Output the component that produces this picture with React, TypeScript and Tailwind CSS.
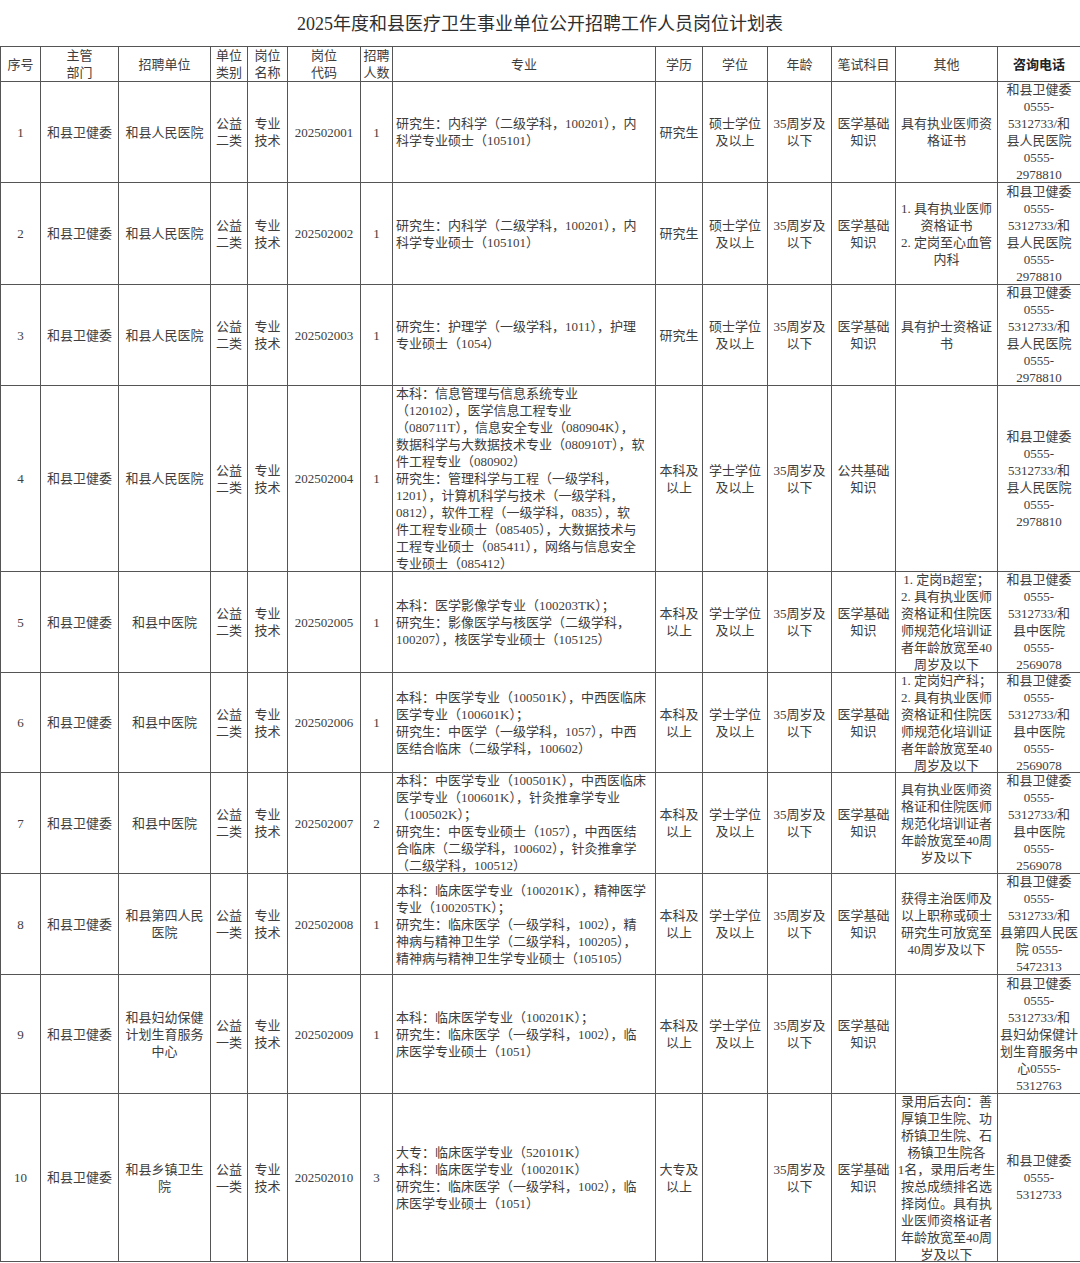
import React from "react";

type Row = {
  no: string;
  dept: string[];
  unit: string[];
  kind: string[];
  post: string[];
  code: string;
  count: string;
  major: string[];
  edu: string[];
  degree: string[];
  age: string[];
  exam: string[];
  other: string[];
  phone: string[];
  h: string;
};

const phoneRenmin = ["和县卫健委", "0555-", "5312733/和", "县人民医院", "0555-", "2978810"];
const phoneZhong = ["和县卫健委", "0555-", "5312733/和", "县中医院", "0555-", "2569078"];
const gy2 = ["公益", "二类"];
const gy1 = ["公益", "一类"];
const zyjs = ["专业", "技术"];
const age35 = ["35周岁及", "以下"];
const yxjc = ["医学基础", "知识"];
const bk = ["本科及", "以上"];
const xs = ["学士学位", "及以上"];

// h = inner cell height (row height minus the 1px border)
const rows: Row[] = [
  {
    no: "1", dept: ["和县卫健委"], unit: ["和县人民医院"], kind: gy2, post: zyjs, code: "202502001", count: "1",
    major: ["研究生：内科学（二级学科，100201），内", "科学专业硕士（105101）"],
    edu: ["研究生"], degree: ["硕士学位", "及以上"], age: age35, exam: yxjc,
    other: ["具有执业医师资", "格证书"], phone: phoneRenmin, h: "h-[100px]",
  },
  {
    no: "2", dept: ["和县卫健委"], unit: ["和县人民医院"], kind: gy2, post: zyjs, code: "202502002", count: "1",
    major: ["研究生：内科学（二级学科，100201），内", "科学专业硕士（105101）"],
    edu: ["研究生"], degree: ["硕士学位", "及以上"], age: age35, exam: yxjc,
    other: ["1. 具有执业医师", "资格证书", "2. 定岗至心血管", "内科"], phone: phoneRenmin, h: "h-[101px]",
  },
  {
    no: "3", dept: ["和县卫健委"], unit: ["和县人民医院"], kind: gy2, post: zyjs, code: "202502003", count: "1",
    major: ["研究生：护理学（一级学科，1011），护理", "专业硕士（1054）"],
    edu: ["研究生"], degree: ["硕士学位", "及以上"], age: age35, exam: yxjc,
    other: ["具有护士资格证", "书"], phone: phoneRenmin, h: "h-[100px]",
  },
  {
    no: "4", dept: ["和县卫健委"], unit: ["和县人民医院"], kind: gy2, post: zyjs, code: "202502004", count: "1",
    major: [
      "本科：信息管理与信息系统专业",
      "（120102），医学信息工程专业",
      "（080711T），信息安全专业（080904K），",
      "数据科学与大数据技术专业（080910T），软",
      "件工程专业（080902）",
      "研究生：管理科学与工程（一级学科，",
      "1201），计算机科学与技术（一级学科，",
      "0812），软件工程（一级学科，0835），软",
      "件工程专业硕士（085405），大数据技术与",
      "工程专业硕士（085411），网络与信息安全",
      "专业硕士（085412）",
    ],
    edu: bk, degree: xs, age: age35, exam: ["公共基础", "知识"],
    other: [], phone: phoneRenmin, h: "h-[185px]",
  },
  {
    no: "5", dept: ["和县卫健委"], unit: ["和县中医院"], kind: gy2, post: zyjs, code: "202502005", count: "1",
    major: ["本科：医学影像学专业（100203TK）；", "研究生：影像医学与核医学（二级学科，", "100207），核医学专业硕士（105125）"],
    edu: bk, degree: xs, age: age35, exam: yxjc,
    other: ["1. 定岗B超室；", "2. 具有执业医师", "资格证和住院医", "师规范化培训证", "者年龄放宽至40", "周岁及以下"],
    phone: phoneZhong, h: "h-[100px]",
  },
  {
    no: "6", dept: ["和县卫健委"], unit: ["和县中医院"], kind: gy2, post: zyjs, code: "202502006", count: "1",
    major: ["本科：中医学专业（100501K），中西医临床", "医学专业（100601K）；", "研究生：中医学（一级学科，1057），中西", "医结合临床（二级学科，100602）"],
    edu: bk, degree: xs, age: age35, exam: yxjc,
    other: ["1. 定岗妇产科；", "2. 具有执业医师", "资格证和住院医", "师规范化培训证", "者年龄放宽至40", "周岁及以下"],
    phone: phoneZhong, h: "h-[99px]",
  },
  {
    no: "7", dept: ["和县卫健委"], unit: ["和县中医院"], kind: gy2, post: zyjs, code: "202502007", count: "2",
    major: [
      "本科：中医学专业（100501K），中西医临床",
      "医学专业（100601K），针灸推拿学专业",
      "（100502K）；",
      "研究生：中医专业硕士（1057），中西医结",
      "合临床（二级学科，100602），针灸推拿学",
      "（二级学科，100512）",
    ],
    edu: bk, degree: xs, age: age35, exam: yxjc,
    other: ["具有执业医师资", "格证和住院医师", "规范化培训证者", "年龄放宽至40周", "岁及以下"],
    phone: phoneZhong, h: "h-[100px]",
  },
  {
    no: "8", dept: ["和县卫健委"], unit: ["和县第四人民", "医院"], kind: gy1, post: zyjs, code: "202502008", count: "1",
    major: [
      "本科：临床医学专业（100201K），精神医学",
      "专业（100205TK）；",
      "研究生：临床医学（一级学科，1002），精",
      "神病与精神卫生学（二级学科，100205），",
      "精神病与精神卫生学专业硕士（105105）",
    ],
    edu: bk, degree: xs, age: age35, exam: yxjc,
    other: ["获得主治医师及", "以上职称或硕士", "研究生可放宽至", "40周岁及以下"],
    phone: ["和县卫健委", "0555-", "5312733/和", "县第四人民医", "院 0555-", "5472313"], h: "h-[100px]",
  },
  {
    no: "9", dept: ["和县卫健委"], unit: ["和县妇幼保健", "计划生育服务", "中心"], kind: gy1, post: zyjs, code: "202502009", count: "1",
    major: ["本科：临床医学专业（100201K）；", "研究生：临床医学（一级学科，1002），临", "床医学专业硕士（1051）"],
    edu: bk, degree: xs, age: age35, exam: yxjc,
    other: [],
    phone: ["和县卫健委", "0555-", "5312733/和", "县妇幼保健计", "划生育服务中", "心0555-", "5312763"], h: "h-[118px]",
  },
  {
    no: "10", dept: ["和县卫健委"], unit: ["和县乡镇卫生", "院"], kind: gy1, post: zyjs, code: "202502010", count: "3",
    major: ["大专：临床医学专业（520101K）", "本科：临床医学专业（100201K）", "研究生：临床医学（一级学科，1002），临", "床医学专业硕士（1051）"],
    edu: ["大专及", "以上"], degree: [], age: age35, exam: yxjc,
    other: [
      "录用后去向：善", "厚镇卫生院、功", "桥镇卫生院、石", "杨镇卫生院各", "1名，录用后考生",
      "按总成绩排名选", "择岗位。具有执", "业医师资格证者", "年龄放宽至40周", "岁及以下",
    ],
    phone: ["和县卫健委", "0555-", "5312733"], h: "h-[167px]",
  },
];

const Cell = ({ lines, h, left }: { lines: string[]; h: string; left?: boolean }) => (
  <td className="border border-[#555] p-0 align-middle">
    <div
      className={`${h} flex flex-col justify-center overflow-hidden ${left ? "items-start pl-[3px]" : "items-center"}`}
    >
      {lines.map((l, i) => (
        <div key={i} className="whitespace-nowrap">{l}</div>
      ))}
    </div>
  </td>
);

const head: string[][] = [
  ["序号"], ["主管", "部门"], ["招聘单位"], ["单位", "类别"], ["岗位", "名称"], ["岗位", "代码"],
  ["招聘", "人数"], ["专业"], ["学历"], ["学位"], ["年龄"], ["笔试科目"], ["其他"],
];

const widths = [
  "w-[40px]", "w-[78px]", "w-[92px]", "w-[37px]", "w-[40px]", "w-[73px]", "w-[32px]",
  "w-[263px]", "w-[47px]", "w-[65px]", "w-[64px]", "w-[64px]", "w-[102px]", "w-[83px]",
];

export default function App() {
  return (
    <div
      className="w-[1080px] h-[1263px] bg-white text-[#3d3d3d] text-[13px] leading-[17px] overflow-hidden"
      style={{ fontFamily: '"Liberation Serif", "Noto Sans CJK SC", serif' }}
    >
      <div className="h-[46px] flex items-center justify-center text-[18px] text-[#2f2f2f] pt-[2px]">
        2025年度和县医疗卫生事业单位公开招聘工作人员岗位计划表
      </div>
      <table className="table-fixed border-collapse w-[1080px]">
        <colgroup>
          {widths.map((w, i) => (
            <col key={i} className={w} />
          ))}
        </colgroup>
        <thead>
          <tr>
            {head.map((h, i) => (
              <Cell key={i} lines={h} h="h-[34px]" />
            ))}
            <td className="border border-[#555] p-0 align-middle">
              <div className="h-[34px] flex items-center justify-center font-bold text-[#222]">咨询电话</div>
            </td>
          </tr>
        </thead>
        <tbody>
          {rows.map((r) => (
            <tr key={r.no}>
              <Cell lines={[r.no]} h={r.h} />
              <Cell lines={r.dept} h={r.h} />
              <Cell lines={r.unit} h={r.h} />
              <Cell lines={r.kind} h={r.h} />
              <Cell lines={r.post} h={r.h} />
              <Cell lines={[r.code]} h={r.h} />
              <Cell lines={[r.count]} h={r.h} />
              <Cell lines={r.major} h={r.h} left />
              <Cell lines={r.edu} h={r.h} />
              <Cell lines={r.degree} h={r.h} />
              <Cell lines={r.age} h={r.h} />
              <Cell lines={r.exam} h={r.h} />
              <Cell lines={r.other} h={r.h} />
              <Cell lines={r.phone} h={r.h} />
            </tr>
          ))}
        </tbody>
      </table>
    </div>
  );
}
